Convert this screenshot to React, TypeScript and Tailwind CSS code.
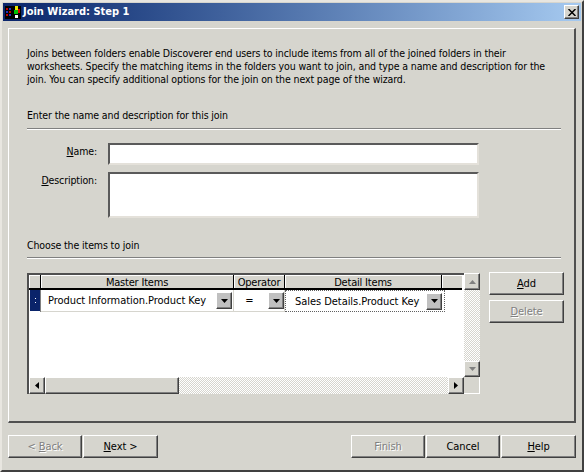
const raised = "border border-t-white border-l-white border-r-[#404040] border-b-[#404040] shadow-[inset_-1px_-1px_0_#808080]";
const sunken = "border-2 border-t-[#5a5a5a] border-l-[#5a5a5a] border-r-[#e4e1da] border-b-[#e4e1da] bg-white";
const checker = "bg-[repeating-conic-gradient(#d6d5ce_0%_25%,#ffffff_0%_50%)] bg-size-[2px_2px]";

function Arrow({ dir, gray }: { dir: "up" | "down" | "left" | "right"; gray?: boolean }) {
  const points = {
    up: "0,4 7,4 3.5,0",
    down: "0,0 7,0 3.5,4",
    left: "4,0 4,7 0,3.5",
    right: "0,0 0,7 4,3.5",
  }[dir];
  const vertical = dir === "up" || dir === "down";
  return (
    <svg width={vertical ? 7 : 4} height={vertical ? 4 : 7} viewBox={vertical ? "0 0 7 4" : "0 0 4 7"}>
      <polygon points={points} fill={gray ? "#808080" : "#000000"} />
    </svg>
  );
}

function ScrollBtn({ dir, gray, className }: { dir: "up" | "down" | "left" | "right"; gray?: boolean; className: string }) {
  return (
    <div className={`${raised} bg-[#d6d5ce] flex items-center justify-center shrink-0 ${className}`}>
      <Arrow dir={dir} gray={gray} />
    </div>
  );
}

function Dropdown() {
  return (
    <div className="w-[16px] h-[17px] shrink-0 bg-[#c0c0c0] border border-t-white border-l-white border-r-[#404040] border-b-[#404040] shadow-[inset_-1px_-1px_0_#808080] flex items-center justify-center">
      <Arrow dir="down" />
    </div>
  );
}

function HeadCell({ label, className }: { label: string; className: string }) {
  return (
    <div className={`${className} h-[15px] pt-[2px] shrink-0 bg-[#d6d5ce] border-r border-r-black border-b-2 border-b-black shadow-[inset_1px_1px_0_#ffffff] flex items-center justify-center text-[11px] tracking-[-0.2px] leading-none`}>
      {label}
    </div>
  );
}

function Btn({ children, disabled, className }: { children: React.ReactNode; disabled?: boolean; className: string }) {
  return (
    <button
      className={`${raised} h-[23px] pt-px bg-[#d6d5ce] flex items-center justify-center text-[11px] tracking-[-0.1px] ${disabled ? "text-[#808080] [text-shadow:1px_1px_0_#ffffff]" : "text-black"} ${className}`}
    >
      <span>{children}</span>
    </button>
  );
}

export default function App() {
  return (
    <div className="w-[584px] h-[472px] flex flex-col bg-[#d6d5ce] text-black overflow-hidden border-2 border-t-[#e8e6e0] border-l-[#e8e6e0] border-r-[#404040] border-b-[#404040] font-['DejaVu_Sans_Condensed','Liberation_Sans',sans-serif] [font-stretch:condensed]">
      {/* title bar */}
      <div className="mx-px mt-px h-[18px] shrink-0 flex items-center bg-linear-to-r from-[#0a246a] to-[#a6caf0] pl-[2px] pr-[2px]">
        <svg width="16" height="14" viewBox="0 0 16 14" className="shrink-0">
          <rect x="0" y="1" width="16" height="13" fill="#000000" />
          <rect x="1" y="3" width="2" height="2" fill="#c00000" />
          <rect x="4" y="3" width="2" height="2" fill="#2030c0" />
          <rect x="1" y="6" width="2" height="2" fill="#2030c0" />
          <rect x="4" y="6" width="2" height="2" fill="#c00000" />
          <rect x="1" y="9" width="2" height="2" fill="#c00000" />
          <rect x="4" y="9" width="2" height="2" fill="#2030c0" />
          <rect x="10" y="1" width="3" height="4" fill="#e8e800" />
          <rect x="13" y="4" width="2" height="4" fill="#e00000" />
          <rect x="9" y="5" width="4" height="4" fill="#00c000" />
          <rect x="10" y="10" width="3" height="3" fill="#ffffff" />
        </svg>
        <span className="ml-[2px] mt-px text-white text-[11px] font-bold">Join Wizard: Step 1</span>
        <div className={`${raised} ml-auto w-[15px] h-[14px] bg-[#d6d5ce] flex items-center justify-center`}>
          <svg width="8" height="7" viewBox="0 0 8 7">
            <path d="M0.5 0 L7.5 7 M7.5 0 L0.5 7" stroke="#000000" strokeWidth="1.5" />
          </svg>
        </div>
      </div>

      {/* wizard page */}
      <div className="ml-[6px] mr-[6px] mt-[7px] h-[395px] shrink-0 border-t border-l border-t-white border-l-white border-r-2 border-b-2 border-r-[#505050] border-b-[#505050] pl-[18px] pr-[13px] pt-[18px]">
        <p className="text-[10.5px] leading-[13px] w-[530px] tracking-[-0.12px]">
          Joins between folders enable Discoverer end users to include items from all of the joined folders in their
          worksheets. Specify the matching items in the folders you want to join, and type a name and description for the
          join. You can specify additional options for the join on the next page of the wizard.
        </p>

        <div className="mt-[23px] text-[10.5px] leading-[13px] tracking-[-0.12px]">Enter the name and description for this join</div>
        <div className="mt-[6px] h-[2px] border-t border-t-[#808080] border-b border-b-white" />

        <div className="mt-[13px] flex">
          <label className="w-[70px] text-right text-[10.5px] leading-[13px] pt-[2px] tracking-[-0.12px]"><u>N</u>ame:</label>
          <div className={`${sunken} ml-[11px] w-[371px] h-[22px]`} />
        </div>
        <div className="mt-[7px] flex">
          <label className="w-[70px] text-right text-[10.5px] leading-[13px] pt-[2px] tracking-[-0.12px]"><u>D</u>escription:</label>
          <div className={`${sunken} ml-[11px] w-[371px] h-[46px]`} />
        </div>

        <div className="mt-[21px] text-[10.5px] leading-[13px] tracking-[-0.12px]">Choose the items to join</div>
        <div className="mt-[5px] h-[2px] border-t border-t-[#808080] border-b border-b-white" />

        <div className="mt-[14px] flex">
          {/* grid */}
          <div className="w-[453px] h-[121px] shrink-0 flex flex-col bg-white border-t-2 border-l-2 border-t-[#505050] border-l-[#505050]">
            <div className="flex h-[102px] shrink-0">
              <div className="w-[433px] shrink-0 flex flex-col">
                <div className="flex">
                  <HeadCell label="" className="w-[12px]" />
                  <HeadCell label="Master Items" className="w-[193px]" />
                  <HeadCell label="Operator" className="w-[51px]" />
                  <HeadCell label="Detail Items" className="w-[157px]" />
                  <HeadCell label="" className="w-[20px] border-r-0" />
                </div>
                <div className="flex h-[22px]">
                  <div className="w-[12px] shrink-0 bg-white pl-px pb-px border-r border-r-[#808080]">
                    <div className="h-full bg-[#0a246a] flex flex-col items-center justify-center gap-[3px]">
                      <div className="w-px h-px bg-white" />
                      <div className="w-px h-px bg-white" />
                    </div>
                  </div>
                  <div className="w-[193px] shrink-0 border-r border-b border-[#d6d5ce] flex items-center pl-[7px] pr-px text-[11px]">
                    <span className="flex-1 mt-[2px] whitespace-nowrap tracking-[-0.05px]">Product Information.Product Key</span>
                    <Dropdown />
                  </div>
                  <div className="w-[51px] shrink-0 border-r border-b border-[#d6d5ce] flex items-center text-[11px]">
                    <span className="flex-1 mt-[2px] text-center pr-[3px]">=</span>
                    <Dropdown />
                  </div>
                  <div className="w-[160px] shrink-0 border border-dotted border-[#606060] flex items-center pl-[9px] pr-[2px] text-[11px]">
                    <span className="flex-1 mt-[2px] whitespace-nowrap tracking-[-0.05px]">Sales Details.Product Key</span>
                    <Dropdown />
                  </div>
                </div>
              </div>
              {/* vertical scrollbar */}
              <div className="w-[16px] ml-[2px] -mt-[2px] shrink-0 flex flex-col">
                <ScrollBtn dir="up" gray className="h-[17px] w-[16px]" />
                <div className={`flex-1 ${checker}`} />
                <ScrollBtn dir="down" gray className="h-[16px] w-[16px]" />
              </div>
            </div>
            {/* horizontal scrollbar */}
            <div className="flex h-[17px] shrink-0">
              <ScrollBtn dir="left" className="w-[16px] h-[17px]" />
              <div className={`${raised} w-[134px] h-[17px] bg-[#d6d5ce] shrink-0`} />
              <div className={`flex-1 ${checker}`} />
              <ScrollBtn dir="right" className="w-[16px] h-[17px]" />
              <div className="w-[16px] bg-[#d6d5ce] shrink-0 border-r border-b border-white" />
            </div>
          </div>

          {/* side buttons */}
          <div className="ml-[9px] -mt-px flex flex-col gap-[5px]">
            <Btn className="w-[75px]"><u>A</u>dd</Btn>
            <Btn disabled className="w-[75px]"><u>D</u>elete</Btn>
          </div>
        </div>
      </div>

      {/* footer */}
      <div className="ml-[6px] mr-[6px] mt-[12px] flex">
        <Btn disabled className="w-[74px]">&lt; <u>B</u>ack</Btn>
        <Btn className="w-[75px] ml-[1px]"><u>N</u>ext &gt;</Btn>
        <Btn disabled className="w-[74px] ml-auto">Finish</Btn>
        <Btn className="w-[74px] ml-px">Cancel</Btn>
        <Btn className="w-[75px] ml-px"><u>H</u>elp</Btn>
      </div>
    </div>
  );
}
